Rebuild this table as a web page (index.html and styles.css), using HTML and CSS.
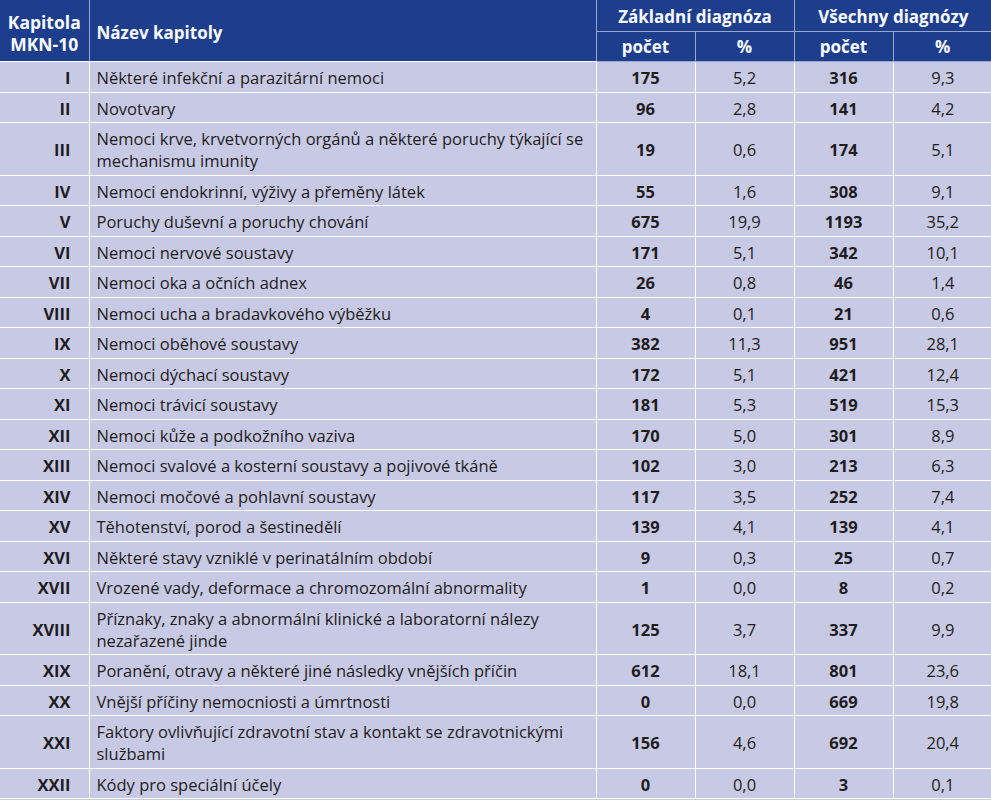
FILE: index.html
```html
<!DOCTYPE html>
<html lang="cs">
<head>
  <meta charset="UTF-8" />
  <meta name="viewport" content="width=device-width, initial-scale=1.0"/>
  <title>Kapitoly MKN-10</title>
  <link rel="stylesheet" href="styles.css">
</head>
<body>
  <table class="mkn-table">
    <colgroup>
      <col class="col-code" />
      <col class="col-name" />
      <col class="col-num" />
      <col class="col-num" />
      <col class="col-num" />
      <col class="col-num" />
    </colgroup>
    <thead>
      <tr class="head-top">
        <th rowspan="2" class="th-code">Kapitola<br />MKN-10</th>
        <th rowspan="2" class="th-name">Název kapitoly</th>
        <th colspan="2">Základní diagnóza</th>
        <th colspan="2">Všechny diagnózy</th>
      </tr>
      <tr class="head-sub">
        <th>počet</th>
        <th>%</th>
        <th>počet</th>
        <th>%</th>
      </tr>
    </thead>
    <tbody>
      <tr><td class="code">I</td><td class="name">Některé infekční a parazitární nemoci</td><td class="cnt">175</td><td class="pct">5,2</td><td class="cnt">316</td><td class="pct">9,3</td></tr>
      <tr><td class="code">II</td><td class="name">Novotvary</td><td class="cnt">96</td><td class="pct">2,8</td><td class="cnt">141</td><td class="pct">4,2</td></tr>
      <tr><td class="code">III</td><td class="name">Nemoci krve, krvetvorných orgánů a některé poruchy týkající se mechanismu imunity</td><td class="cnt">19</td><td class="pct">0,6</td><td class="cnt">174</td><td class="pct">5,1</td></tr>
      <tr><td class="code">IV</td><td class="name">Nemoci endokrinní, výživy a přeměny látek</td><td class="cnt">55</td><td class="pct">1,6</td><td class="cnt">308</td><td class="pct">9,1</td></tr>
      <tr><td class="code">V</td><td class="name">Poruchy duševní a poruchy chování</td><td class="cnt">675</td><td class="pct">19,9</td><td class="cnt">1193</td><td class="pct">35,2</td></tr>
      <tr><td class="code">VI</td><td class="name">Nemoci nervové soustavy</td><td class="cnt">171</td><td class="pct">5,1</td><td class="cnt">342</td><td class="pct">10,1</td></tr>
      <tr><td class="code">VII</td><td class="name">Nemoci oka a očních adnex</td><td class="cnt">26</td><td class="pct">0,8</td><td class="cnt">46</td><td class="pct">1,4</td></tr>
      <tr><td class="code">VIII</td><td class="name">Nemoci ucha a bradavkového výběžku</td><td class="cnt">4</td><td class="pct">0,1</td><td class="cnt">21</td><td class="pct">0,6</td></tr>
      <tr><td class="code">IX</td><td class="name">Nemoci oběhové soustavy</td><td class="cnt">382</td><td class="pct">11,3</td><td class="cnt">951</td><td class="pct">28,1</td></tr>
      <tr><td class="code">X</td><td class="name">Nemoci dýchací soustavy</td><td class="cnt">172</td><td class="pct">5,1</td><td class="cnt">421</td><td class="pct">12,4</td></tr>
      <tr><td class="code">XI</td><td class="name">Nemoci trávicí soustavy</td><td class="cnt">181</td><td class="pct">5,3</td><td class="cnt">519</td><td class="pct">15,3</td></tr>
      <tr><td class="code">XII</td><td class="name">Nemoci kůže a podkožního vaziva</td><td class="cnt">170</td><td class="pct">5,0</td><td class="cnt">301</td><td class="pct">8,9</td></tr>
      <tr><td class="code">XIII</td><td class="name">Nemoci svalové a kosterní soustavy a pojivové tkáně</td><td class="cnt">102</td><td class="pct">3,0</td><td class="cnt">213</td><td class="pct">6,3</td></tr>
      <tr><td class="code">XIV</td><td class="name">Nemoci močové a pohlavní soustavy</td><td class="cnt">117</td><td class="pct">3,5</td><td class="cnt">252</td><td class="pct">7,4</td></tr>
      <tr><td class="code">XV</td><td class="name">Těhotenství, porod a šestinedělí</td><td class="cnt">139</td><td class="pct">4,1</td><td class="cnt">139</td><td class="pct">4,1</td></tr>
      <tr><td class="code">XVI</td><td class="name">Některé stavy vzniklé v perinatálním období</td><td class="cnt">9</td><td class="pct">0,3</td><td class="cnt">25</td><td class="pct">0,7</td></tr>
      <tr><td class="code">XVII</td><td class="name">Vrozené vady, deformace a chromozomální abnormality</td><td class="cnt">1</td><td class="pct">0,0</td><td class="cnt">8</td><td class="pct">0,2</td></tr>
      <tr><td class="code">XVIII</td><td class="name">Příznaky, znaky a abnormální klinické a laboratorní nálezy nezařazené jinde</td><td class="cnt">125</td><td class="pct">3,7</td><td class="cnt">337</td><td class="pct">9,9</td></tr>
      <tr><td class="code">XIX</td><td class="name">Poranění, otravy a některé jiné následky vnějších příčin</td><td class="cnt">612</td><td class="pct">18,1</td><td class="cnt">801</td><td class="pct">23,6</td></tr>
      <tr><td class="code">XX</td><td class="name">Vnější příčiny nemocniosti a úmrtnosti</td><td class="cnt">0</td><td class="pct">0,0</td><td class="cnt">669</td><td class="pct">19,8</td></tr>
      <tr><td class="code">XXI</td><td class="name">Faktory ovlivňující zdravotní stav a kontakt se zdravotnickými službami</td><td class="cnt">156</td><td class="pct">4,6</td><td class="cnt">692</td><td class="pct">20,4</td></tr>
      <tr><td class="code">XXII</td><td class="name">Kódy pro speciální účely</td><td class="cnt">0</td><td class="pct">0,0</td><td class="cnt">3</td><td class="pct">0,1</td></tr>
    </tbody>
  </table>
</body>
</html>
```

FILE: styles.css
```css
body {
  margin: 0;
  padding: 0;
  background-color: #c8cae5;
  font-family: "Open Sans", "Noto Sans", sans-serif;
  color: #1f1c1d;
}

.mkn-table {
  width: 991px;
  border-collapse: collapse;
  table-layout: fixed;
  background-color: #c8cae5;
}

.col-code { width: 89px; }
.col-name { width: 507px; }
.col-num { width: 99px; }

.mkn-table th,
.mkn-table td {
  border: 1px solid #ffffff;
}

.mkn-table tr:first-child th,
.mkn-table tr:first-child td {
  border-top: none;
}

.mkn-table th:first-child,
.mkn-table td:first-child {
  border-left: none;
}

.mkn-table th:last-child,
.mkn-table td:last-child {
  border-right: none;
}

/* Header */
.mkn-table thead th {
  background-color: #1d3d8d;
  color: #ffffff;
  font-size: 17px;
  font-weight: 700;
  text-align: center;
  line-height: 22px;
  border-color: #9aa6cc;
}

.head-top th {
  height: 28px;
  padding: 3px 2px 0;
}

.head-sub th {
  height: 28px;
  padding: 1px 2px 0;
  border-bottom-color: #ffffff;
}

.mkn-table thead .th-code {
  font-size: 17.5px;
  padding: 4px 2px 0;
  border-bottom-color: #ffffff;
}

.mkn-table thead .th-name {
  text-align: left;
  padding: 4px 4px 0 7px;
  border-bottom-color: #ffffff;
}

/* Body */
.mkn-table td {
  font-size: 16.5px;
  line-height: 22px;
  padding: 5px 8px 2.5px;
  vertical-align: middle;
}

.code {
  text-align: right;
  font-weight: 700;
  padding-right: 18px !important;
}

.name {
  padding-left: 7px !important;
}

.cnt {
  text-align: center;
  font-weight: 700;
}

.pct {
  text-align: center;
}
```
